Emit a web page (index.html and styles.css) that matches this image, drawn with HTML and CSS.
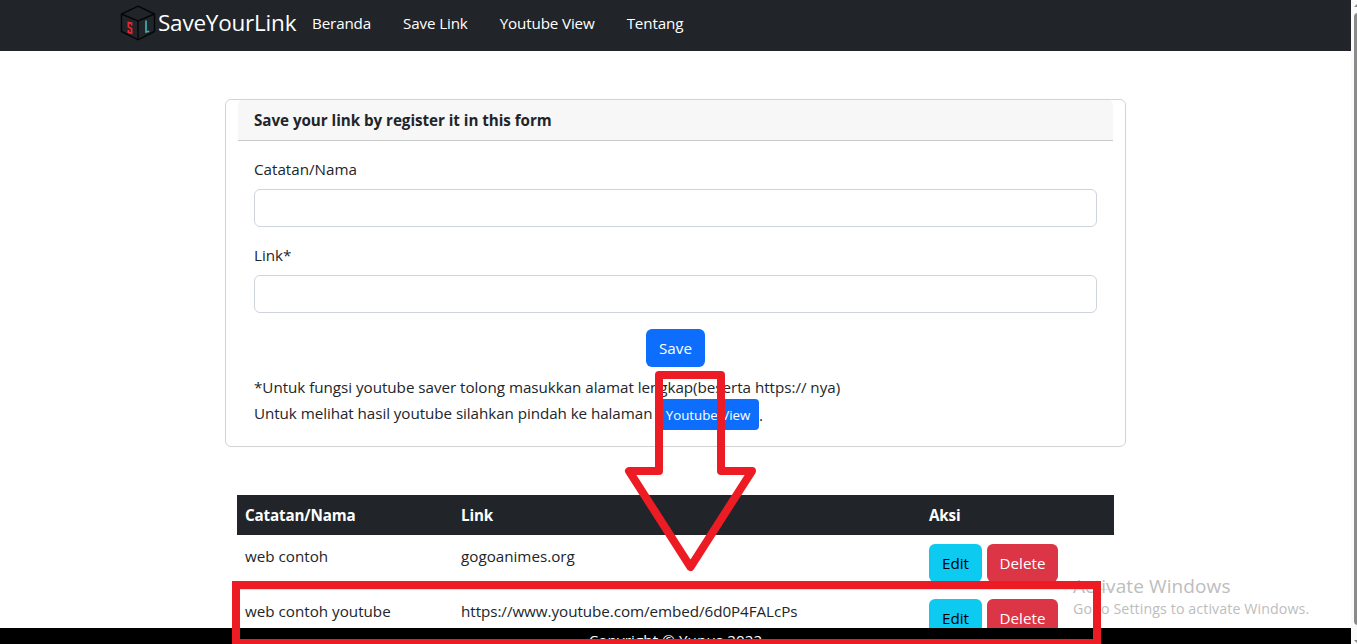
FILE: index.html
```html
<!DOCTYPE html>
<html lang="id">
<head>
<meta charset="utf-8">
<title>SaveYourLink</title>
<link rel="stylesheet" href="styles.css">
</head>
<body>
<div class="page">
  <nav class="navbar">
    <a class="brand">
      <svg class="logo" viewBox="0 0 36 36" width="36" height="36" fill="none">
        <path d="M18 1.200 34.500 9V26.500L18 34.800 1.500 26.500V9ZM1.500 9 18 16 34.500 9M18 16V34.800" stroke="#050607" stroke-width="1.400"/>
        <path d="M11.600 20.500V18.300L8.400 17.600V21.800L11.600 23.800V28.200L8.400 27.400V25" stroke="#f0262e" stroke-width="1.700"/>
        <path d="M26 15.500V27L29.200 26.200" stroke="#3fb0b4" stroke-width="1.700"/>
      </svg>
      <span>SaveYourLink</span>
    </a>
    <div class="menu">
      <a>Beranda</a><a>Save Link</a><a>Youtube View</a><a>Tentang</a>
    </div>
  </nav>
  <main class="content">
    <section class="card">
      <h1 class="card-header">Save your link by register it in this form</h1>
      <form class="card-body">
        <label for="name">Catatan/Nama</label>
        <input id="name" class="field" type="text">
        <label for="link">Link*</label>
        <input id="link" class="field" type="text">
        <button type="button" class="btn primary save">Save</button>
        <p class="note"><span class="note-line first">*Untuk fungsi youtube saver tolong masukkan alamat lengkap(beserta https:// nya)</span>
        <span class="note-line"><span class="note-text">Untuk melihat hasil youtube silahkan pindah ke halaman</span><a class="btn primary small">Youtube View</a><span>.</span></span></p>
      </form>
    </section>
    <section class="links">
      <div class="row head"><span>Catatan/Nama</span><span>Link</span><span>Aksi</span></div>
      <div class="row"><span>web contoh</span><span>gogoanimes.org</span><span class="actions"><a class="btn info">Edit</a><a class="btn danger">Delete</a></span></div>
      <div class="row"><span>web contoh youtube</span><span class="url">https://www.youtube.com/embed/6d0P4FALcPs</span><span class="actions"><a class="btn info">Edit</a><a class="btn danger">Delete</a></span></div>
    </section>
  </main>
</div>
<footer class="footer">Copyright © Yunus 2022</footer>
<div class="scrollbar"><span class="up"></span><span class="thumb"></span><span class="down"></span></div>
<div class="watermark"><div class="wm-title">Activate Windows</div><div class="wm-text">Go to Settings to activate Windows.</div></div>
<svg class="annotation" viewBox="0 0 1357 644" width="1357" height="644" fill="none" stroke="#ed1c24" stroke-width="8">
  <path d="M659 375H721V471H752L690.500 567 629 471H659Z" stroke-linejoin="round"/>
  <rect x="236" y="585" width="861" height="58"/>
</svg>
</body>
</html>
```

FILE: styles.css
```css
* { box-sizing: border-box; }
body {
  margin: 0;
  height: 644px;
  overflow: hidden;
  background: #fff;
  color: #212529;
  font-family: "Open Sans", "Noto Sans", sans-serif;
  font-size: 15.200px;
  line-height: 24px;
}
.page { width: 1351px; height: 644px; overflow: hidden; }
.navbar {
  display: flex;
  align-items: center;
  height: 51px;
  padding: 0 0 5px 120px;
  background: #212529;
  color: #fff;
}
.brand { display: flex; align-items: center; width: 192px; gap: 2px; font-size: 22.500px; letter-spacing: -0.220px; }
.menu { display: flex; gap: 32px; letter-spacing: -0.140px; }
.content { display: flex; flex-direction: column; align-items: center; padding-top: 48px; }
.card {
  width: 901px;
  height: 348px;
  padding: 0 12px;
  border: 1px solid #d2d3d4;
  border-radius: 6px;
}
.card-header {
  height: 41px;
  margin: 0;
  padding: 8px 16px;
  border-bottom: 1px solid #c9cacb;
  border-radius: 5px 5px 0 0;
  background: #f7f7f7;
  font-size: 15.200px;
  font-weight: 700;
  line-height: 24px;
  letter-spacing: -0.040px;
}
.card-body { display: flex; flex-direction: column; padding: 16px; }
.card-body label { margin-bottom: 8px; }
.field {
  height: 38px;
  margin: 0 0 16px;
  border: 1px solid #ced4da;
  border-radius: 6px;
  background: #fff;
}
.btn {
  display: inline-flex;
  align-items: center;
  justify-content: center;
  height: 38px;
  border: 0;
  border-radius: 6px;
  font: inherit;
  color: #fff;
}
.primary { background: #0d6efd; }
.save { width: 59px; align-self: center; }
.note { margin: 8px 0 0; }
.note-line { display: flex; align-items: center; height: 31px; white-space: nowrap; }
.note-line.first { height: 24px; letter-spacing: -0.030px; }
.note-text { width: 403px; padding-bottom: 3px; letter-spacing: -0.060px; }
.small { width: 102px; height: 31px; border-radius: 4px; font-size: 13.300px; }
.links { width: 877px; margin-top: 48px; }
.row {
  display: grid;
  grid-template-columns: 216px 468px 1fr;
  height: 55px;
  padding: 9px 8px;
  border-bottom: 1px solid #dee2e6;
}
.head { height: 40px; padding: 8px; border: 0; background: #212529; color: #fff; font-weight: 700; letter-spacing: -0.150px; }
.url { letter-spacing: -0.050px; }
.actions { display: flex; gap: 5px; }
.info { width: 53px; background: #0dcaf0; color: #000; }
.danger { width: 71px; background: #dc3545; }
.footer {
  position: absolute;
  top: 628px;
  left: 0;
  width: 1351px;
  height: 24px;
  background: #000;
  color: #fff;
  text-align: center;
  letter-spacing: 0.100px;
}
.scrollbar {
  position: absolute;
  top: 0;
  left: 1351px;
  width: 6px;
  height: 644px;
  overflow: hidden;
  background: #fafafb;
}
.thumb { position: absolute; top: 13px; left: 3px; width: 8px; height: 612px; border-radius: 4px; background: #8a8a8a; }
.up, .down { position: absolute; left: 3px; border: 4px solid transparent; }
.up { top: -1px; border-bottom-color: #8a8a8a; }
.down { top: 640px; border-top-color: #8a8a8a; }
.watermark { position: absolute; top: 574px; left: 1073px; color: #bdbdbd; white-space: nowrap; }
.wm-title { font-size: 19px; line-height: 24px; letter-spacing: 0.100px; }
.wm-text { font-size: 14.200px; line-height: 21px; letter-spacing: 0.110px; }
.annotation { position: absolute; top: 0; left: 0; }
```
